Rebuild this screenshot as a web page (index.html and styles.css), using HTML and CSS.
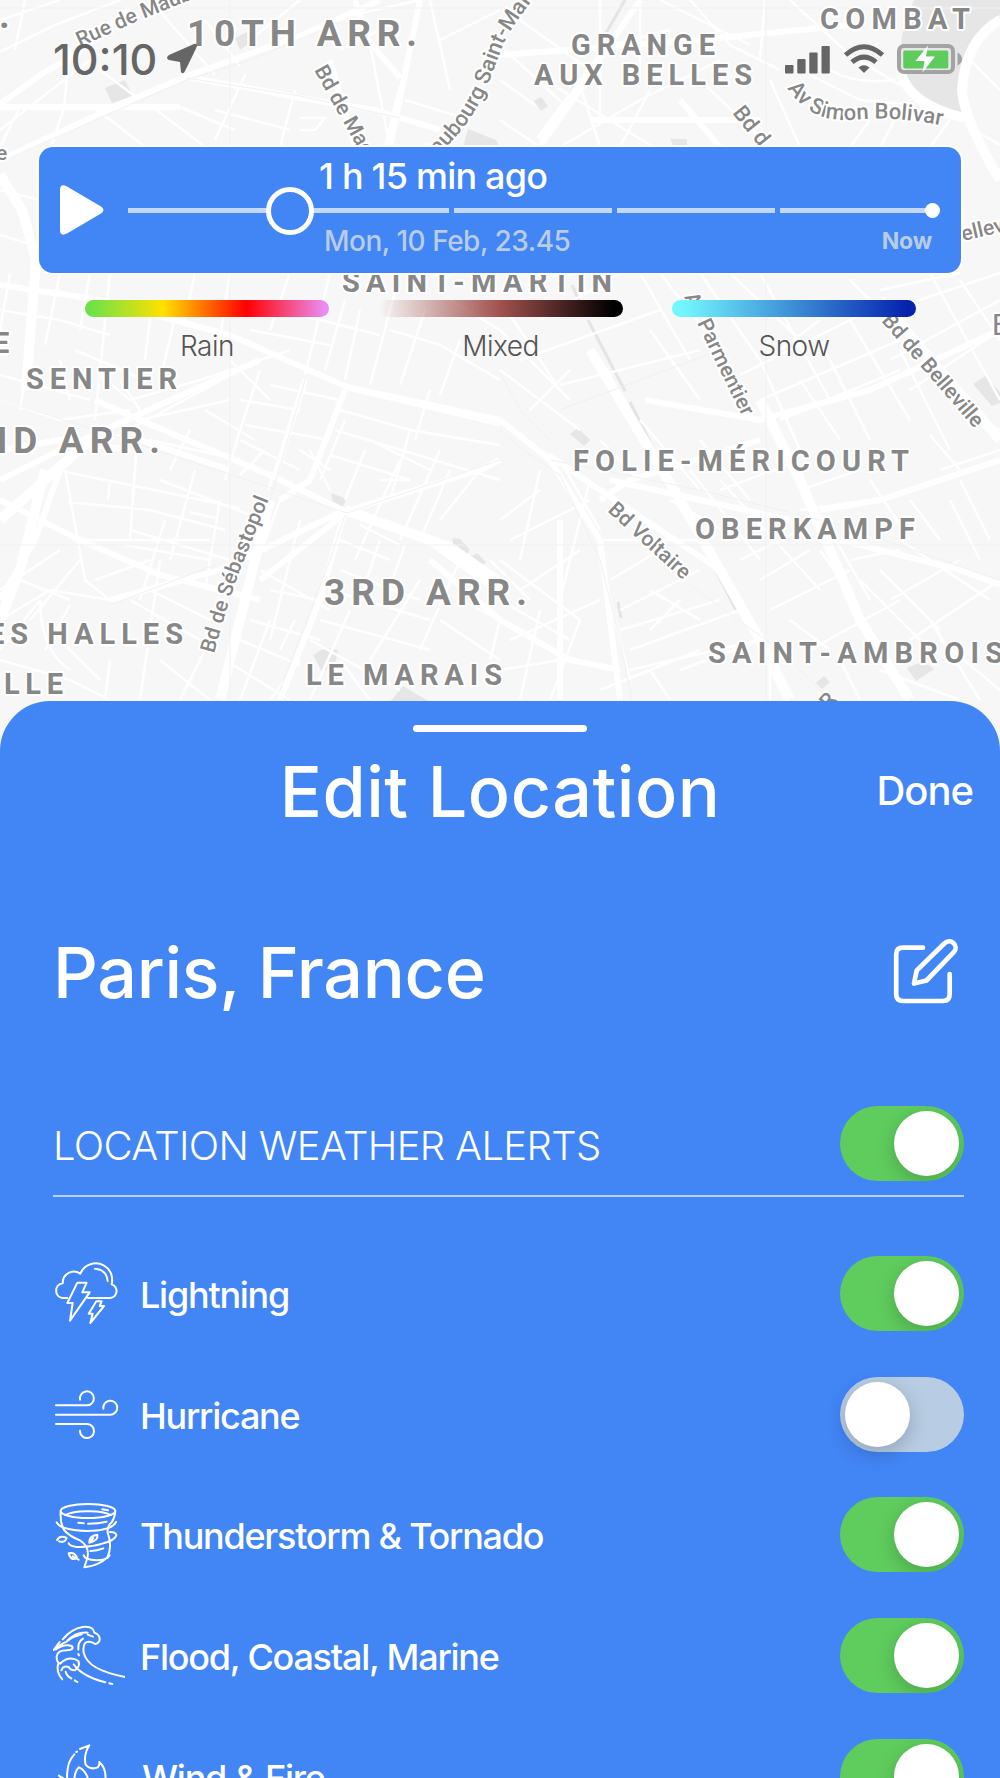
FILE: index.html
```html
<!DOCTYPE html>
<html lang="en">
<head>
<meta charset="UTF-8">
<meta name="viewport" content="width=device-width, initial-scale=1.0">
<title>Edit Location</title>
<link rel="stylesheet" href="styles.css">
</head>
<body>
<div class="screen">

  <!-- map background -->
  <svg class="map" width="1000" height="760" viewBox="0 0 1000 760">
    <defs>
      <path id="rue-maub" d="M80,47 L135,22 L210,-8"/>
      <path id="bd-mag" d="M314,70 L370,170"/>
      <path id="faubourg" d="M430,164 Q452,142 464,127 Q482,102 489,82 L503,45 Q512,25 545,-16"/>
      <path id="simon" d="M787,88 C800,106 815,121 850,120 C885,117 910,119 945,126"/>
      <path id="bd-d" d="M732,113 L775,166"/>
      <path id="parmentier" d="M684,297 Q697,322 716,363 L742,416"/>
      <path id="belleville" d="M881,321 L974,428"/>
      <path id="voltaire" d="M607,511 L684,581"/>
      <path id="sebastopol" d="M214,654 Q228,602 242,565 L270,496"/>
    </defs>
    <g class="park">
      <path d="M914,0 H1000 V14 L975,45 L962,75 L962,117 L940,113 L915,95 L899,70 L902,35 Z"/>
      <path d="M468,129 L496,140 L500,147 H463 Z"/>
      <path d="M105,88 L125,80 L133,96 L112,103 Z"/>
      <path d="M235,38 L247,32 L247,45 L240,50 Z"/>
      <path d="M331,493 L347,499 L342,508 L333,503 Z"/>
      <path d="M313,655 L325,648 L338,650 L335,665 L322,672 Z"/>
      <path d="M390,702 L403,686 L430,702 Z"/>
      <path d="M570,434 L578,428 L590,440 L584,446 Z"/>
      <path d="M973,384 L985,376 L1000,392 V403 L992,406 Z"/>
      <path d="M452,538 L460,539 L470,550 L466,555 L454,548 Z M470,557 L477,553 L486,562 L479,570 Z"/>
      <path d="M907,668 L923,661 L934,669 L916,681 Z M816,683 L824,676 L830,682 L822,689 Z"/>
      <path d="M534,101 L541,97 L548,106 L541,111 Z M670,139 H687 V145 H673 Z"/>
    </g>
    <g class="canal">
      <path d="M625,0 L602,40 M575,85 L545,140 M572,285 L580,303 M588,320 L625,391 M630,402 L654,450 M717,573 L730,598 L736,610 M618,602 L621,618"/>
    </g>
    <g class="roads small">
      <path d="M0,20 L60,0 M0,52 L55,25 L120,0 M25,0 L15,50 M70,48 L64,108 L50,150 M0,130 L90,60 M100,70 L140,100 M95,108 L145,147 M20,107 L0,147 M150,105 L205,147 M150,0 L215,75 M205,20 L240,66 M245,75 L215,140 M215,110 L290,130 M180,107 L235,130 M295,90 L280,147 M300,118 H325 L315,130 H300 M250,40 L300,0 M330,20 L420,0 M340,50 L400,20 M370,45 L390,147 M400,85 L385,147 M405,100 L470,120 M430,0 L450,90 M440,40 L500,10"/>
      <path d="M500,80 L535,105 M520,20 L590,70 M505,50 L570,110 M500,120 L540,147 M560,147 L640,100 L720,60 M600,0 L600,120 M640,0 V80 M660,0 L750,45 M590,50 L670,30 M690,0 L730,45 L780,70 M700,80 L770,147 M545,80 L650,145 M650,90 L620,147 M580,85 L600,147 M765,0 L760,60 M790,0 L850,55 L900,85 M770,80 L800,147 M810,75 L860,100 L915,105 M830,70 Q855,85 895,80 M870,120 L850,147 M900,110 L880,147 M950,120 L930,147 M965,125 L1000,145 M970,60 L1000,90"/>
      <path d="M0,235 L33,245 M0,190 L40,200 M10,273 L0,330 M60,273 L45,345 M90,273 L80,330 M0,310 L60,320 L110,335 M55,290 L130,310 M110,273 L95,420 M75,350 L140,378 M150,318 L145,360 M175,318 L160,380 M195,273 L185,320 M230,273 L218,350 M250,330 L330,345 M290,273 L270,330 M330,273 L305,375 M345,300 L325,370 M280,310 L380,335 M360,310 L345,380 M400,273 L370,385 M425,310 L400,385 M450,300 L500,330 M440,345 L500,380 M390,330 L440,345 M460,340 L440,395"/>
      <path d="M0,375 L90,400 M30,350 L20,410 M60,360 L70,400 M0,400 L60,420 L130,410 M100,375 L130,400 L200,380 L290,350 M110,440 L240,370 M140,420 L230,400 M120,380 L140,410 M230,360 L270,400 M190,430 L170,470 M150,440 L240,460 M205,410 L255,440 M260,370 L240,430 L225,480 M240,400 L300,410 M270,385 L340,400 M245,425 L330,440 M240,440 L300,470 M265,450 L240,475 M320,480 L345,420 M300,400 L268,490"/>
      <path d="M65,470 L85,580 L110,600 M65,472 L130,485 L240,508 M68,502 L150,510 L225,530 M80,540 L210,540 M110,480 L108,500 M137,440 L130,540 M165,520 L140,600 M195,470 L170,560 M130,530 L230,560 M125,545 L210,560 M220,500 L205,590 M160,480 L250,515 M190,512 L215,518 M0,590 L60,550 M20,580 L70,600 M30,620 L80,560 M0,620 L50,590 L110,600 M0,650 L40,600 M95,580 L150,560 M40,600 Q40,650 70,670 M60,640 L100,680 M70,605 L45,650 M0,660 L70,680 L110,700 M110,660 L105,700 M130,600 L200,640 M150,590 L210,620 M160,560 L140,700"/>
      <path d="M350,390 L500,425 M340,410 L410,430 L500,445 M335,430 L500,480 M330,455 L410,480 M365,450 L345,500 M410,430 L390,500 M430,390 L415,440 M400,460 L355,560 M370,440 L430,470 M440,450 L400,540 M450,470 L420,540 M480,470 L440,520 M410,480 L380,480 M300,450 L330,470 M310,450 L330,490 M260,570 L330,610 M270,590 L320,600 M280,500 L240,610 M300,520 L270,640 M340,540 L390,560 M360,525 L400,545 M340,570 L420,600 M330,590 L430,620 M320,620 L430,650 M310,640 L400,690 M380,540 L360,600 M405,545 L385,600 M420,580 L370,660 M460,560 L420,650 M440,620 L500,660 M250,620 L320,640 M240,640 L300,665 M225,660 L290,700 M270,620 L240,700 M295,620 L280,650 M300,660 L270,700 M210,640 L180,700 M160,660 L210,700 M350,610 L310,700 M340,660 L370,700 M490,560 L530,600 M460,600 L500,620 L490,660"/>
      <path d="M500,370 L580,430 M500,330 L570,400 M530,410 L570,370 M500,300 L560,390 M540,320 L620,273 M520,360 L660,310 M560,385 L700,350 M640,273 L690,360 M650,330 L700,400 M660,273 L720,350 M700,273 L760,360 L800,450 M730,273 L800,340 M760,273 L830,400 M780,350 L820,320 M740,375 L870,310 M760,400 L900,340 M800,380 L840,440 M820,340 L870,440 M850,320 L910,420 M880,290 L960,273 M890,310 L1000,273 M850,280 L920,350 M890,360 L1000,300 M910,390 L1000,330 M930,273 L1000,400 M960,280 L1000,340 M900,350 L950,450 M930,435 L960,470 M960,410 L1000,430 M780,420 L900,370"/>
      <path d="M560,460 L600,530 M540,470 L520,560 M500,520 L540,490 M510,540 L590,500 M500,560 L580,620 M520,590 L580,550 M600,440 L640,480 M640,420 L700,490 M590,480 L560,600 M600,540 L700,540 M610,580 L660,550 M600,560 L630,680 M650,590 L700,620 M620,610 L700,570 M620,630 L720,600 M630,650 L740,610 M630,670 L760,640 M650,630 L680,600 M670,500 L740,540 M690,470 L760,560 M720,480 L820,590 M700,440 L750,500 M720,490 L800,460 M740,560 L800,530 M760,580 L810,550 M770,610 L850,570 M790,620 L830,650 M810,650 L900,600 M820,550 L840,580 M830,530 L870,600 M850,560 L900,550 M860,580 L920,640 M880,570 L940,630 M890,600 L960,560 M910,640 L1000,580 M930,620 L980,700 M900,540 L990,600 M950,500 L980,560 M910,500 L940,540 M960,480 L990,540 M940,470 L1000,450 M870,480 L910,540 M800,490 L860,470 M800,510 L870,500 M500,600 L570,640 M510,640 L600,600 M540,610 L520,700 M580,620 L550,700 M500,670 L560,660 M600,690 L700,650 M680,670 L760,640 M650,670 L670,700 M840,660 L860,700 M880,670 L960,700 M940,640 L1000,690 M770,640 V700"/>
    </g>
    <g class="roads">
      <path d="M0,104 L40,75 L75,55 L130,8 M0,160 L123,103 L187,76 L300,36 L380,0 M187,77 L260,90 L300,98 L375,110 L440,130 M0,107 H180 M355,0 L368,40 L400,78 M330,60 L355,147 M420,0 L390,147 M540,147 L640,0 M680,100 L720,147 M590,120 H760 M500,55 L700,40 L850,25"/>
      <path d="M0,285 L100,300 L230,335 L347,387 L500,420 M95,400 L140,420 L270,475 L347,512 L450,545 L500,580 M0,500 L80,540 L160,575 L260,600 M0,480 L60,450 L260,360 M0,450 L60,440 L130,450 M345,390 L310,480 L280,500 M260,580 L350,510 L480,470 L500,460 M275,475 L305,380 M140,440 L230,470 M345,510 L320,600 L280,700 M110,600 L220,570 L345,510 M60,470 L35,540 L0,600"/>
      <path d="M500,420 L550,460 L600,540 L620,700 M560,520 V700 M548,455 L600,490 L720,570 M645,400 L760,420 L870,390 L1000,330 M610,480 L700,500 L790,520 M820,510 L880,500 L1000,460 M500,620 L570,660 L620,670 M430,560 L500,620 M600,500 L630,480 L760,440 M840,540 L960,570 L1000,585"/>
    </g>
    <g class="roads big">
      <path d="M0,175 L22,210 L36,260 L26,390 M45,470 L20,570 L0,620 M0,520 L90,440 M500,590 L430,540 L345,510 M540,140 L600,60 M590,350 L680,500 L760,640 L790,700 M760,400 L800,480 L860,620 L910,700 M880,300 L1000,440 M900,70 Q908,105 965,118 M1000,20 Q965,40 962,90 Q964,120 1000,180 M270,500 L220,700"/>
    </g>
    <g class="rails">
      <path d="M0,162 L123,108 L187,80 L250,60 L340,22 M187,78 L300,96 L400,118 M0,400 L80,425 L347,513 L500,460 M500,430 L530,455 L560,475 L600,560 L620,640 L632,700 M550,460 L700,490 L840,525 L1000,580 M110,605 L215,565 M345,515 L330,560 L280,690 M305,380 L270,500 M500,372 L520,410 L550,440 M0,545 H1000 M230,0 V700 M766,0 V700 M0,8 H1000 M690,585 L780,650 L830,700 M560,410 L720,350"/>
    </g>
    <g class="street">
      <text><textPath href="#rue-maub">Rue de Maubeuge</textPath></text>
      <text><textPath href="#bd-mag">Bd de Mag</textPath></text>
      <text class="wide"><textPath href="#faubourg">Faubourg Saint-Martin</textPath></text>
      <text class="wide"><textPath href="#simon">Av Simon Bolivar</textPath></text>
      <text class="wide"><textPath href="#bd-d">Bd d</textPath></text>
      <text><textPath href="#parmentier">Av Parmentier</textPath></text>
      <text><textPath href="#belleville">Bd de Belleville</textPath></text>
      <text><textPath href="#voltaire">Bd Voltaire</textPath></text>
      <text><textPath href="#sebastopol">Bd de Sébastopol</textPath></text>
      <text x="963" y="241" transform="rotate(-13 963 241)">ellev</text>
      <text x="-4" y="160">e</text>
      <text x="829" y="710" transform="rotate(-50 829 710)">R</text>
    </g>
    <g class="area">
      <text x="820" y="29" textLength="150">COMBAT</text>
      <text x="571" y="55" textLength="144">GRANGE</text>
      <text x="534" y="85" textLength="218">AUX BELLES</text>
      <text x="342" y="292" textLength="270">SAINT-MARTIN</text>
      <text x="26" y="389" textLength="151">SENTIER</text>
      <text x="-12" y="644" textLength="195">ES HALLES</text>
      <text x="4" y="694" textLength="59">LLE</text>
      <text x="306" y="685" textLength="196">LE MARAIS</text>
      <text x="573" y="471" textLength="336">FOLIE-MÉRICOURT</text>
      <text x="695" y="539" textLength="220">OBERKAMPF</text>
      <text x="708" y="663" textLength="295">SAINT-AMBROIS</text>
      <text x="-7" y="353">E</text>
      <text x="992" y="335" class="light">B</text>
    </g>
    <g class="district">
      <text x="-1" y="28">.</text>
      <text x="187" y="46" textLength="230">10TH ARR.</text>
      <text x="-19" y="453" textLength="179">ND ARR.</text>
      <text x="324" y="605" textLength="203">3RD ARR.</text>
    </g>
  </svg>

  <header class="status-bar">
    <div class="clock">
      <span>10:10</span>
      <svg width="32" height="32" viewBox="0 0 32 32"><path d="M28,1 Q31,0 31,3 Q30,6 19,28 Q17,32 15,29 L14,19 L3,17 Q-1,15 3,12 Z" fill="#666"/></svg>
    </div>
    <div class="signals">
      <svg width="46" height="30" viewBox="0 0 46 30" fill="#666">
        <rect x="0" y="21" width="8.5" height="8.5" rx="1"/>
        <rect x="12.3" y="15" width="8.3" height="14.5" rx="1"/>
        <rect x="24.3" y="8.5" width="8.3" height="21" rx="1"/>
        <rect x="36.5" y="2" width="8.3" height="27.5" rx="1"/>
      </svg>
      <svg width="42" height="30" viewBox="0 0 42 30" fill="none" stroke="#666" stroke-width="5">
        <path d="M2.5,11 Q21,-5.5 39.5,11"/>
        <path d="M9,18.2 Q21,8 33,18.2"/>
        <path d="M15.5,23.5 Q21,19 26.5,23.5 L21,29 Z" fill="#666" stroke="none"/>
      </svg>
      <svg width="66" height="30" viewBox="0 0 66 30">
        <rect x="2" y="2" width="54" height="26" rx="5" fill="none" stroke="#a3a3a3" stroke-width="4"/>
        <rect x="6.3" y="6.5" width="45" height="18" rx="1.5" fill="#5fcb5c"/>
        <path d="M60.5,8.5 Q65,11 65,15 Q65,19 60.5,21.5 Z" fill="#a3a3a3"/>
        <path d="M31,1.5 L18.5,17 H27.5 L25.5,28.5 L38,12.5 H29 Z" fill="#fff"/>
      </svg>
    </div>
  </header>

  <section class="timeline">
    <svg width="44" height="50" viewBox="0 0 44 50"><path d="M0,5 Q0,-2 7,1.5 L41,21.5 Q46,25 41,28.5 L7,48.5 Q0,52 0,45 Z" fill="#fff"/></svg>
    <div class="timeline-body">
      <div class="ago">1 h 15 min ago</div>
      <div class="track">
        <i></i><i></i><i></i><i></i><i></i>
        <span class="thumb"></span>
        <span class="end-dot"></span>
      </div>
      <div class="dates"><span class="date">Mon, 10 Feb, 23.45</span><b>Now</b></div>
    </div>
  </section>

  <section class="legend">
    <div class="legend-item"><div class="bar rain"></div>Rain</div>
    <div class="legend-item"><div class="bar mixed"></div>Mixed</div>
    <div class="legend-item"><div class="bar snow"></div>Snow</div>
  </section>

  <main class="sheet">
    <div class="handle"></div>
    <div class="sheet-header">
      <h1>Edit Location</h1>
      <a class="done">Done</a>
    </div>
    <div class="place">
      <h2>Paris, France</h2>
      <svg width="70" height="70" viewBox="890 935 70 70" fill="none" stroke="#fff" stroke-width="4.7" stroke-linecap="round" stroke-linejoin="round">
        <path d="M923,946.7 H903 Q896.2,946.7 896.2,953.5 V993 Q896.2,1000 903,1000 H943 Q949.7,1000 949.7,993 V973"/>
        <path d="M914,982.5 L916.7,969.5 L944.5,942.3 A6.2,6.2 0 0 1 953.8,951.2 L926.5,979.5 Z"/>
      </svg>
    </div>

    <div class="alerts-header">
      <span>LOCATION WEATHER ALERTS</span>
      <div class="toggle on"></div>
    </div>

    <ul class="alerts">
      <li>
        <svg class="icon" viewBox="39 52 216 216">
          <path d="M82,175 H68 C42,172 42,134 68,131 C68,102 98,86 121,102 C133,73 166,64 191,77 C213,89 220,113 215,134 C238,144 232,175 208,175 H144"/>
          <path d="M165,87 Q200,90 203,124"/>
          <path d="M112,129 H140 L127,158 H149 L90,243 L98,190 H82 Z"/>
          <path d="M169,185 H185 L179,199 H192 L151,250 L158,222 H146 Z"/>
        </svg>
        <span>Lightning</span>
        <div class="toggle on"></div>
      </li>
      <li>
        <svg class="icon" viewBox="39 415 216 216">
          <path d="M48,497 H142 A21,21 0 1 0 120,480"/>
          <path d="M48,525 H212 A21,21 0 1 0 190,507"/>
          <path d="M48,553 H142 A21,21 0 1 1 120,573"/>
        </svg>
        <span>Hurricane</span>
        <div class="toggle"></div>
      </li>
      <li>
        <svg class="icon" viewBox="39 57 216 216">
          <ellipse cx="144" cy="93" rx="82" ry="21"/>
          <path d="M76,105 Q100,93 144,94 Q190,93 212,105"/>
          <path d="M62,93 Q60,130 72,150 Q90,170 120,181 Q150,200 142,234 L133,262 Q178,256 202,232 Q218,200 203,158 Q200,140 215,127 Q225,112 226,93"/>
          <path d="M50,127 Q60,150 142,153 Q215,152 228,126"/>
          <path d="M210,156 Q230,157 229,166 Q224,181 190,190 Q150,203 110,201 Q88,198 86,190"/>
          <path d="M131,226 Q134,240 170,241 Q202,240 209,226"/>
          <path d="M115,128 L131,130 M144,131 Q175,131 200,125 M187,88 L204,91 M151,213 Q172,212 190,205"/>
          <path d="M51,180 Q60,164 80,174 Q74,190 57,184 M148,188 Q145,168 172,164 Q176,182 148,188 L160,174 M86,220 Q104,216 111,233 Q94,246 86,220 M98,229 L116,239"/>
        </svg>
        <span>Thunderstorm &amp; Tornado</span>
        <div class="toggle on"></div>
      </li>
      <li>
        <svg class="icon" viewBox="39 419 216 216">
          <path d="M68,480 Q95,448 128,443 Q160,440 163,460 Q183,468 178,485 Q170,500 156,489 Q126,480 131,520 Q142,572 256,593"/>
          <path d="M59,488 L41,512 Q68,490 80,487 Q105,458 143,460 M143,466 L159,472"/>
          <path d="M47,510 Q75,492 95,500 Q105,512 80,513 Q52,513 50,532 Q49,548 60,553 Q88,527 115,545 Q122,562 104,573 Q90,572 86,563 Q70,558 64,573"/>
          <path d="M54,555 Q48,580 67,600 M77,577 Q80,590 94,597 M104,603 L112,608 M101,555 Q125,590 196,609 M208,612 L217,614"/>
          <path d="M115,511 Q113,488 129,478 M115,524 L117,528 M82,484 Q103,470 125,465"/>
        </svg>
        <span>Flood, Coastal, Marine</span>
        <div class="toggle on"></div>
      </li>
      <li>
        <svg class="icon" viewBox="39 781 216 216">
          <path d="M103,824 Q84,845 82,876 Q80,895 83,905 M109,817 L111,816 M120,808 L148,797 Q130,825 137,855 Q150,872 173,863 Q180,855 178,847 Q202,870 195,905"/>
          <path d="M103,900 Q104,875 117,863 Q137,872 145,900"/>
          <path d="M57,888 Q60,892 68,894"/>
        </svg>
        <span class="last">Wind &amp; Fire</span>
        <div class="toggle on"></div>
      </li>
    </ul>
  </main>
</div>
</body>
</html>
```
FILE: styles.css
```css
body {
    margin: 0;
    font-family: Inter, "Liberation Sans", sans-serif;
}
.screen {
    position: relative;
    display: flex;
    flex-direction: column;
    width: 1000px;
    height: 1778px;
    overflow: hidden;
    background: #f7f7f7;
}
.map {
    position: absolute;
    top: 0;
    left: 0;
    font-family: Roboto, sans-serif;
}
.map .park {
    fill: #e6e6e6;
}
.map .canal {
    fill: none;
    stroke: #e4e4e4;
    stroke-width: 3;
}
.map .roads {
    fill: none;
    stroke: #fff;
    stroke-width: 6;
}
.map .small {
    stroke-width: 2.5;
}
.map .big {
    stroke-width: 10;
}
.map .rails {
    fill: none;
    stroke: #f1f1f1;
    stroke-width: 1;
}
.map text {
    fill: #878787;
    stroke: #fff;
    stroke-width: 4px;
    stroke-linejoin: round;
    paint-order: stroke;
}
.map .street {
    font-size: 21px;
    font-weight: 500;
}
.map .street .wide {
    font-size: 22px;
}
.map .area {
    font-size: 29px;
    font-weight: 700;
}
.map .area .light {
    font-weight: 400;
}
.map .district {
    font-size: 37px;
    font-weight: 700;
}

.status-bar,
.timeline,
.legend,
.sheet {
    position: relative;
}
.status-bar {
    display: flex;
    justify-content: space-between;
    align-items: center;
    box-sizing: border-box;
    height: 147px;
    padding: 0 37px 29px 53px;
}
.clock {
    display: flex;
    align-items: center;
    gap: 9px;
    font-size: 43px;
    font-weight: 450;
    letter-spacing: 0;
    color: #666;
}
.signals {
    display: flex;
    gap: 12px;
}

.timeline {
    display: flex;
    align-items: center;
    gap: 24px;
    box-sizing: border-box;
    height: 126px;
    margin: 0 39px;
    padding: 0 21px;
    border-radius: 14px;
    background: #4285f5;
    box-shadow: 0 0 0 2px #fff;
    color: #fff;
}
.timeline-body {
    flex: 1;
    height: 126px;
}
.ago {
    padding-left: 191px;
    line-height: 58px;
    font-size: 36px;
    font-weight: 500;
    letter-spacing: -0.8px;
}
.track {
    position: relative;
    display: flex;
    align-items: center;
    gap: 4.5px;
    height: 11px;
    padding-right: 2px;
}
.track i {
    flex: 1;
    height: 5px;
    background: #c3d8fb;
}
.thumb {
    position: absolute;
    left: 138px;
    top: -18.5px;
    width: 38px;
    height: 38px;
    border: 5px solid #fff;
    border-radius: 50%;
    background: #4285f5;
}
.end-dot {
    position: absolute;
    right: 0;
    top: -2px;
    width: 15px;
    height: 15px;
    border-radius: 50%;
    background: #fff;
}
.dates {
    display: flex;
    justify-content: space-between;
    padding: 0 8px 0 196px;
    line-height: 51px;
    font-size: 28px;
    font-weight: 500;
    letter-spacing: -0.5px;
    color: #b8cce3;
}
.dates b {
    font-size: 23px;
    font-weight: 700;
    letter-spacing: -0.2px;
}

.legend {
    display: flex;
    justify-content: space-between;
    height: 427.5px;
    box-sizing: border-box;
    padding: 26.5px 84px 0 85px;
}
.legend-item {
    width: 244px;
    text-align: center;
    font-size: 28px;
    font-weight: 300;
    line-height: 58px;
    letter-spacing: -0.5px;
    color: #555;
}
.bar {
    height: 17px;
    border-radius: 9px;
}
.rain {
    background: linear-gradient(to right, #6be24a 2%, #ffe100 32%, #ff0000 66%, #ea8cf0 98%);
}
.mixed {
    background: linear-gradient(to right, rgba(255, 255, 255, 0), #a0504c 50%, #000 96%);
}
.snow {
    background: linear-gradient(to right, #73f7ff 4%, #0623ae 96%);
}

.sheet {
    flex: 1;
    border-radius: 50px 50px 0 0;
    background: #4285f5;
    color: #fff;
    overflow: hidden;
}
.handle {
    width: 174px;
    height: 7px;
    margin: 24.5px auto 0;
    border-radius: 4px;
    background: #fff;
}
.sheet-header {
    display: grid;
    grid-template-columns: 1fr auto 1fr;
    align-items: center;
    height: 119px;
    padding-right: 27px;
}
h1,
h2 {
    margin: 0;
    font-size: 70px;
    font-weight: 500;
    line-height: 80px;
}
h1 {
    grid-column: 2;
    padding-left: 27px;
    letter-spacing: 0.5px;
}
.done {
    justify-self: end;
    padding-bottom: 3px;
    font-size: 40px;
    font-weight: 500;
    letter-spacing: -1px;
}
.place {
    display: flex;
    justify-content: space-between;
    align-items: center;
    margin-top: 70px;
    padding: 0 40px 0 53px;
    height: 100px;
}
h2 {
    padding-top: 3px;
    letter-spacing: -0.3px;
}
.alerts-header {
    display: flex;
    justify-content: space-between;
    align-items: center;
    margin: 76px 36px 0 53px;
    padding: 9px 0 14px;
    border-bottom: 2px solid #b9d1fb;
    font-size: 40px;
    font-weight: 300;
    letter-spacing: -0.65px;
}
.alerts-header span {
    padding-top: 3px;
}
.alerts {
    list-style: none;
    margin: 36px 36px 0 53px;
    padding: 0;
}
.alerts li {
    display: flex;
    align-items: center;
    gap: 15px;
    height: 120.7px;
    font-size: 36px;
    font-weight: 500;
    letter-spacing: -1.25px;
}
.alerts span {
    padding-top: 3px;
}
.alerts .last {
    padding-left: 2px;
}
.alerts .toggle {
    margin-left: auto;
}
.icon {
    width: 72px;
    height: 72px;
    fill: none;
    stroke: #fff;
    stroke-width: 6;
    stroke-linecap: round;
    stroke-linejoin: round;
}
.toggle {
    box-sizing: border-box;
    width: 124px;
    height: 75px;
    padding: 5px;
    border-radius: 38px;
    background: #b8cce3;
}
.toggle::after {
    content: "";
    display: block;
    width: 65px;
    height: 65px;
    border-radius: 50%;
    background: #fff;
    box-shadow: 0 6px 20px rgba(0, 0, 0, 0.2);
}
.toggle.on {
    background: #5fcd5d;
    overflow: hidden;
}
.toggle.on::after {
    margin-left: auto;
}
```
